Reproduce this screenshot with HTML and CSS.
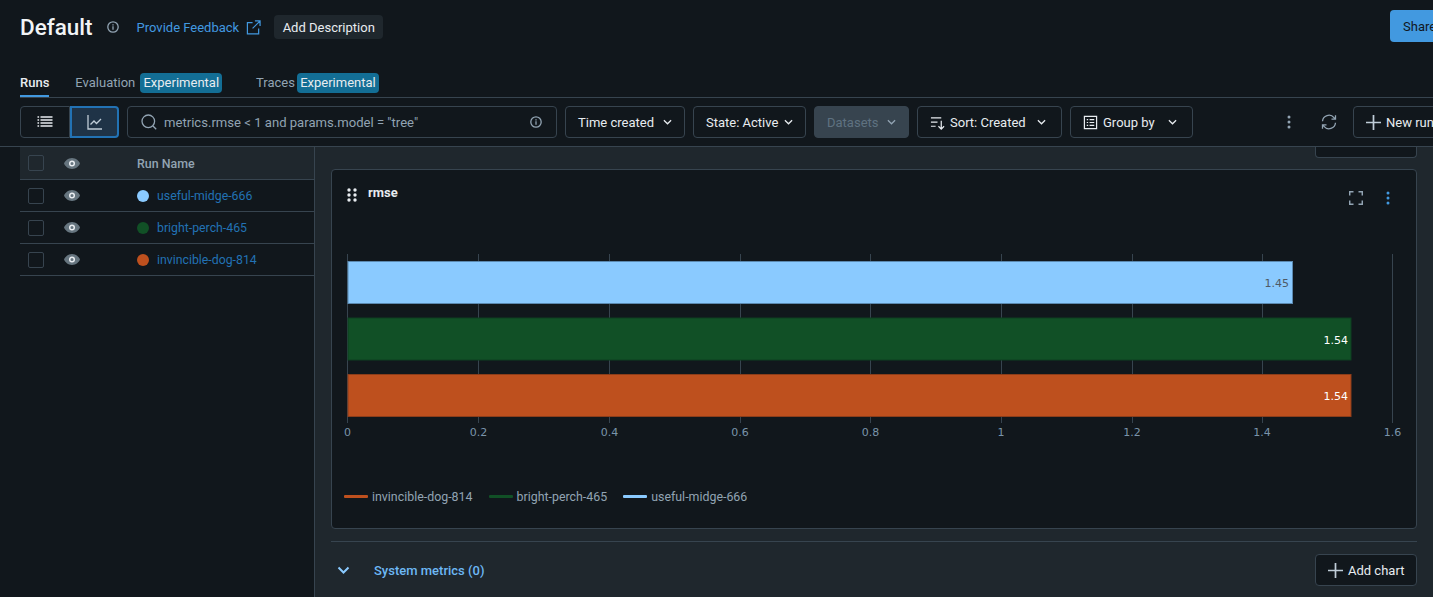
FILE: index.html
```html
<!DOCTYPE html>
<html lang="en">
<head>
	<meta charset="utf-8">
	<title>Default</title>
	<link rel="stylesheet" href="styles.css">
</head>
<body>
<div class="page">
	<div class="header">
		<h1 class="title">Default</h1>
		<svg class="icon info-head" viewBox="0 0 14 14"><circle cx="7" cy="7" r="5.2"/><path d="M7 6.3v3.4M7 4.2v1.2"/></svg>
		<a class="feedback">Provide Feedback</a>
		<svg class="icon ext" viewBox="0 0 16 16"><path d="M7 2.800H1.500v12h12V9M9.500 1h5.500v5.500M14.800 1.200 7 9"/></svg>
		<button class="add-desc">Add Description</button>
		<button class="share">Share</button>
	</div>

	<div class="tabs">
		<div class="tab active">Runs</div>
		<div class="tab">Evaluation <span class="tag tag-eval">Experimental</span></div>
		<div class="tab">Traces <span class="tag tag-trace">Experimental</span></div>
	</div>

	<div class="toolbar">
		<div class="toggle">
			<div class="toggle-btn">
				<svg class="icon" viewBox="0 0 16 16"><path d="M.5 3h1.6M3.5 3h12M.5 6h1.6M3.5 6h12M.5 9h1.6M3.5 9h12M.5 12h1.6M3.5 12h12"/></svg>
			</div>
			<div class="toggle-btn on">
				<svg class="icon" viewBox="0 0 16 16"><path d="M1 1v14h14M3.5 10.5 7 7l2.5 2.5L14 5"/></svg>
			</div>
		</div>
		<div class="search">
			<svg class="icon search-icon" viewBox="0 0 16 16"><circle cx="7.3" cy="7.3" r="6.3"/><path d="m12 12 3.2 3.2"/></svg>
			<span class="search-text">metrics.rmse &lt; 1 and params.model = "tree"</span>
			<svg class="icon info" viewBox="0 0 14 14"><circle cx="7" cy="7" r="5.2"/><path d="M7 6.3v3.4M7 4.2v1.2"/></svg>
		</div>
		<button class="btn w-time">Time created <svg class="chev" viewBox="0 0 10 6"><path d="m1 1 4 4 4-4"/></svg></button>
		<button class="btn w-state">State: Active <svg class="chev" viewBox="0 0 10 6"><path d="m1 1 4 4 4-4"/></svg></button>
		<button class="btn w-data disabled">Datasets <svg class="chev" viewBox="0 0 10 6"><path d="m1 1 4 4 4-4"/></svg></button>
		<button class="btn w-sort">
			<svg class="icon btn-icon" viewBox="0 0 16 16"><path d="M1 3h11M1 7.500h7M1 12h5M12 6v9M9 12l3 3 3-3"/></svg>
			<span class="btn-label">Sort: Created</span> <svg class="chev" viewBox="0 0 10 6"><path d="m1 1 4 4 4-4"/></svg>
		</button>
		<button class="btn w-group">
			<svg class="icon btn-icon" viewBox="0 0 16 16"><path d="M1.500 1.500h13v13h-13zM4 5h1.500M7 5h5M4 8h1.500M7 8h5M4 11h1.500M7 11h5"/></svg>
			<span class="btn-label">Group by</span> <svg class="chev" viewBox="0 0 10 6"><path d="m1 1 4 4 4-4"/></svg>
		</button>
		<div class="tool-right">
			<svg class="dots" viewBox="0 0 4 14"><circle cx="2" cy="2" r="1.500"/><circle cx="2" cy="7" r="1.500"/><circle cx="2" cy="12" r="1.500"/></svg>
			<svg class="icon refresh" viewBox="0 0 16 16"><path d="M1.500 7.200A6.500 6.500 0 0 1 13 3.600l1.500 1.600M14.500 1.200v4h-4M14.500 8.800A6.500 6.500 0 0 1 3 12.400l-1.500-1.600M1.500 14.800v-4h4"/></svg>
			<button class="btn new-run"><svg class="icon plus" viewBox="0 0 14 14"><path d="M7 0v14M0 7h14"/></svg>New run</button>
		</div>
	</div>

	<div class="content">
		<div class="sidebar">
			<div class="row head">
				<span class="check"></span>
				<svg class="eye" viewBox="0 0 16 11"><path d="M8 0c4 0 7 3 8 5.500C15 8 12 11 8 11S1 8 0 5.500C1 3 4 0 8 0z"/><circle cx="8" cy="5.500" r="2.300"/></svg>
				<span class="col-name">Run Name</span>
			</div>
			<div class="row">
				<span class="check"></span>
				<svg class="eye" viewBox="0 0 16 11"><path d="M8 0c4 0 7 3 8 5.500C15 8 12 11 8 11S1 8 0 5.500C1 3 4 0 8 0z"/><circle cx="8" cy="5.500" r="2.300"/></svg>
				<span class="dot c-blue"></span><a class="run-link">useful-midge-666</a>
			</div>
			<div class="row">
				<span class="check"></span>
				<svg class="eye" viewBox="0 0 16 11"><path d="M8 0c4 0 7 3 8 5.500C15 8 12 11 8 11S1 8 0 5.500C1 3 4 0 8 0z"/><circle cx="8" cy="5.500" r="2.300"/></svg>
				<span class="dot c-green"></span><a class="run-link">bright-perch-465</a>
			</div>
			<div class="row">
				<span class="check"></span>
				<svg class="eye" viewBox="0 0 16 11"><path d="M8 0c4 0 7 3 8 5.500C15 8 12 11 8 11S1 8 0 5.500C1 3 4 0 8 0z"/><circle cx="8" cy="5.500" r="2.300"/></svg>
				<span class="dot c-orange"></span><a class="run-link">invincible-dog-814</a>
			</div>
		</div>

		<div class="main">
			<div class="cut-top">
				<span class="cut-btn"></span>
			</div>
			<div class="card">
				<div class="card-head">
					<svg class="grip" viewBox="0 0 10 14"><circle cx="2" cy="2" r="1.700"/><circle cx="8" cy="2" r="1.700"/><circle cx="2" cy="7" r="1.700"/><circle cx="8" cy="7" r="1.700"/><circle cx="2" cy="12" r="1.700"/><circle cx="8" cy="12" r="1.700"/></svg>
					<span class="card-title">rmse</span>
					<svg class="icon expand" viewBox="0 0 14 14"><path d="M.7 4.500V.7h3.800M9.500 .7h3.800v3.800M.7 9.500v3.800h3.800M9.500 13.300h3.800V9.500"/></svg>
					<svg class="dots blue" viewBox="0 0 4 14"><circle cx="2" cy="2" r="1.500"/><circle cx="2" cy="7" r="1.500"/><circle cx="2" cy="12" r="1.500"/></svg>
				</div>
				<svg class="plot" width="1084" height="196" viewBox="332 247 1084 196">
					<g class="grid">
						<path d="M347.500 254v169M478.500 254v169M609.500 254v169M740.500 254v169M870.500 254v169M1001.500 254v169M1132.500 254v169M1262.500 254v169M1392.500 254v169"/>
					</g>
					<rect x="348" y="261.500" width="944.500" height="42" fill="#8acaff" stroke="#5b89b0"/>
					<rect x="348" y="318" width="1003" height="42" fill="#115026" stroke="#0f3f20"/>
					<rect x="348" y="374.500" width="1003" height="42" fill="#be501e" stroke="#8c3d1a"/>
					<g class="bar-val">
						<text x="1289" y="287" fill="#4f5a66">1.45</text>
						<text x="1348" y="344" fill="#fff">1.54</text>
						<text x="1348" y="400" fill="#fff">1.54</text>
					</g>
					<g class="tick">
						<text x="347.500" y="436">0</text>
						<text x="478.500" y="436">0.2</text>
						<text x="609.500" y="436">0.4</text>
						<text x="740" y="436">0.6</text>
						<text x="870.500" y="436">0.8</text>
						<text x="1001" y="436">1</text>
						<text x="1132" y="436">1.2</text>
						<text x="1262" y="436">1.4</text>
						<text x="1392.500" y="436">1.6</text>
					</g>
				</svg>
				<div class="legend">
					<span class="leg-item"><i class="swatch c-orange"></i>invincible-dog-814</span>
					<span class="leg-item"><i class="swatch c-green"></i>bright-perch-465</span>
					<span class="leg-item"><i class="swatch c-blue"></i>useful-midge-666</span>
				</div>
			</div>
			<div class="section">
				<svg class="section-chev" viewBox="0 0 12 8"><path d="m1 1.500 5 5 5-5"/></svg>
				<span class="section-name">System metrics (0)</span>
				<button class="btn add-chart"><svg class="icon plus" viewBox="0 0 14 14"><path d="M7 0v14M0 7h14"/></svg>Add chart</button>
			</div>
		</div>
	</div>
</div>
</body>
</html>
```

FILE: styles.css
```css
html, body {
	margin: 0;
	height: 597px;
	overflow: hidden;
	background: #11171c;
}

body {
	font-family: Roboto, "Liberation Sans", sans-serif;
	font-size: 13px;
	color: #e8ecf0;
}

button {
	font-family: inherit;
	font-size: 13px;
}

.page {
	width: 1433px;
	height: 597px;
	overflow: hidden;
	display: flex;
	flex-direction: column;
}

.icon {
	fill: none;
	stroke: currentColor;
	stroke-width: 1.3;
	flex: none;
}

/* header */
.header {
	height: 32px;
	margin-top: 11px;
	padding-left: 20px;
	display: flex;
	align-items: center;
}

.title {
	margin: 0;
	font-size: 22.500px;
	font-weight: 500;
	color: #f1f4f6;
}

.info-head {
	width: 14px;
	height: 14px;
	margin-left: 13px;
	color: #92a4b3;
}

.feedback {
	margin-left: 17px;
	color: #4299e0;
}

.ext {
	width: 15px;
	height: 15px;
	margin-left: 7px;
	color: #4299e0;
}

.add-desc {
	width: 109px;
	height: 24px;
	flex: none;
	margin-left: 13px;
	padding: 0;
	border: 0;
	border-radius: 4px;
	background: #1f272d;
	color: #e8ecf0;
}

.share {
	width: 80px;
	height: 32px;
	flex: none;
	margin-left: auto;
	margin-right: -37px;
	margin-top: -2px;
	padding: 0 13px;
	border: 0;
	border-radius: 4px;
	background: #4299e0;
	color: #11171c;
	text-align: left;
}

/* tabs */
.tabs {
	height: 25px;
	margin: 29px 0 0 20px;
	display: flex;
	gap: 26px;
	border-bottom: 1px solid #37444f;
}

.tab {
	height: 24px;
	padding-top: 1px;
	color: #92a4b3;
	line-height: 20px;
	white-space: nowrap;
}

.tab.active {
	height: 22px;
	color: #e8ecf0;
	font-weight: 500;
	border-bottom: 2px solid #4299e0;
}

.tag {
	display: inline-block;
	height: 20px;
	margin-right: 8px;
	padding: 0 3px;
	border-radius: 4px;
	background: #136e95;
	color: #e8ecf0;
	line-height: 20px;
}

.tag-eval { margin-left: 2px; }
.tag-trace { margin-left: -1px; }

/* toolbar */
.toolbar {
	height: 32px;
	margin-top: 8px;
	margin-left: 20px;
	display: flex;
	gap: 8px;
}

.toggle {
	display: flex;
	flex: none;
}

.toggle-btn {
	width: 50px;
	height: 32px;
	box-sizing: border-box;
	border: 1px solid #37444f;
	border-radius: 4px 0 0 4px;
	display: flex;
	align-items: center;
	justify-content: center;
	color: #e8ecf0;
}

.toggle-btn .icon {
	width: 16px;
	height: 16px;
}

.toggle-btn.on {
	width: 49px;
	border: 2px solid #2272b4;
	border-radius: 0 4px 4px 0;
	background: #1f3347;
	color: #c0cdd8;
}

.search {
	width: 430px;
	height: 32px;
	box-sizing: border-box;
	flex: none;
	border: 1px solid #37444f;
	border-radius: 4px;
	display: flex;
	align-items: center;
	padding: 0 13px;
}

.search-icon {
	width: 16px;
	height: 16px;
	color: #92a4b3;
}

.search-text {
	margin-left: 7px;
	font-size: 13.100px;
	color: #92a4b3;
}

.info {
	width: 14px;
	height: 14px;
	margin-left: auto;
	color: #92a4b3;
}

.btn {
	height: 32px;
	box-sizing: border-box;
	flex: none;
	padding: 0 12px;
	border: 1px solid #37444f;
	border-radius: 4px;
	background: #11171c;
	color: #e8ecf0;
	display: flex;
	align-items: center;
	justify-content: space-between;
	white-space: nowrap;
}

.chev {
	width: 9px;
	height: 6px;
	fill: none;
	stroke: currentColor;
	stroke-width: 1.4;
	flex: none;
}

.w-time { width: 120px; }
.w-state { width: 113px; }
.w-data { width: 95px; }
.w-sort { width: 145px; padding-right: 15px; }
.w-group { width: 123px; padding-right: 15px; }

.btn.disabled {
	background: #37444f;
	border-color: #37444f;
	color: #5f7281;
}

.btn.disabled .chev {
	color: #92a4b3;
}

.btn-icon {
	width: 15px;
	height: 15px;
	color: #e8ecf0;
}

.btn-label {
	margin-left: 5px;
	margin-right: auto;
}

.tool-right {
	margin-left: 86px;
	display: flex;
	align-items: center;
	flex: none;
}

.dots {
	width: 4px;
	height: 14px;
	fill: #92a4b3;
	flex: none;
}

.dots.blue {
	fill: #4299e0;
	margin-left: 23px;
	margin-top: 3px;
}

.refresh {
	width: 16px;
	height: 16px;
	margin-left: 30px;
	color: #92a4b3;
}

.new-run {
	width: 100px;
	margin-left: 16px;
	justify-content: flex-start;
}

.plus {
	width: 15px;
	height: 15px;
	margin-right: 5px;
	stroke-width: 1.600;
	color: #c0cdd8;
}

/* content */
.content {
	flex: 1;
	margin-top: 8px;
	border-top: 1px solid #37444f;
	display: flex;
	min-height: 0;
}

.sidebar {
	width: 294px;
	margin-left: 20px;
	border-right: 1px solid #37444f;
	flex: none;
}

.row {
	height: 31px;
	display: flex;
	align-items: center;
	border-bottom: 1px solid #37444f;
	padding-left: 8px;
}

.row.head {
	height: 32px;
	background: #1f272d;
}

.check {
	width: 14px;
	height: 14px;
	border: 1px solid #37444f;
	border-radius: 2px;
	flex: none;
}

.eye {
	width: 16px;
	height: 11px;
	margin-left: 20px;
	flex: none;
	fill: #66757f;
}

.eye circle {
	fill: #66757f;
	stroke: #e8ecf0;
	stroke-width: 1.500;
}

.col-name {
	margin-left: 57px;
	padding-top: 1px;
	font-size: 12.400px;
	font-weight: 500;
	color: #92a4b3;
}

.dot {
	width: 12px;
	height: 12px;
	border-radius: 50%;
	margin-left: 57px;
	flex: none;
}

.c-blue { background: #8acaff; }
.c-green { background: #115026; }
.c-orange { background: #be501e; }

.run-link {
	margin-left: 8px;
	padding-top: 1px;
	font-size: 12.300px;
	color: #2272b4;
}

.main {
	flex: 1;
	min-width: 0;
	background: #1f272d;
	padding: 0 16px;
}

.cut-top {
	height: 10px;
	display: flex;
	justify-content: flex-end;
}

.cut-btn {
	width: 100px;
	height: 10px;
	background: #11171c;
	border: 1px solid #37444f;
	border-top: 0;
	border-radius: 0 0 4px 4px;
}

.card {
	height: 360px;
	margin-top: 12px;
	box-sizing: border-box;
	border: 1px solid #37444f;
	border-radius: 4px;
	background: #11171c;
	display: flex;
	flex-direction: column;
}

.card-head {
	height: 77px;
	flex: none;
	display: flex;
	align-items: flex-start;
	padding: 18px 26px 0 15px;
	box-sizing: border-box;
}

.grip {
	width: 10px;
	height: 14px;
	fill: #e8ecf0;
	flex: none;
}

.card-title {
	margin-left: 11px;
	margin-top: -3px;
	font-size: 13px;
	font-weight: 700;
	color: #e8ecf0;
}

.expand {
	width: 14px;
	height: 14px;
	margin-left: auto;
	margin-top: 3px;
	color: #92a4b3;
	stroke-width: 1.500;
}

.plot {
	display: block;
	flex: none;
}

.grid path {
	stroke: #37444f;
	fill: none;
}

.bar-val text {
	font-family: "DejaVu Sans", sans-serif;
	font-size: 11px;
	text-anchor: end;
}

.tick text {
	font-family: "DejaVu Sans", sans-serif;
	font-size: 11px;
	fill: #7a94aa;
	text-anchor: middle;
}

.legend {
	margin-top: 46px;
	padding-left: 12px;
	display: flex;
	gap: 16px;
	font-size: 12.400px;
	color: #92a4b3;
}

.leg-item {
	display: flex;
	align-items: center;
	gap: 4px;
}

.swatch {
	width: 24px;
	height: 3px;
	border-radius: 1px;
}

.section {
	height: 56px;
	margin-top: 12px;
	border-top: 1px solid #37444f;
	display: flex;
	align-items: center;
	padding-left: 6px;
}

.section-chev {
	width: 13px;
	height: 8px;
	fill: none;
	stroke: #8acaff;
	stroke-width: 2;
	flex: none;
}

.section-name {
	margin-left: 24px;
	font-size: 13px;
	font-weight: 500;
	color: #6db8f5;
}

.add-chart {
	width: 102px;
	margin-left: auto;
	justify-content: flex-start;
}
```
